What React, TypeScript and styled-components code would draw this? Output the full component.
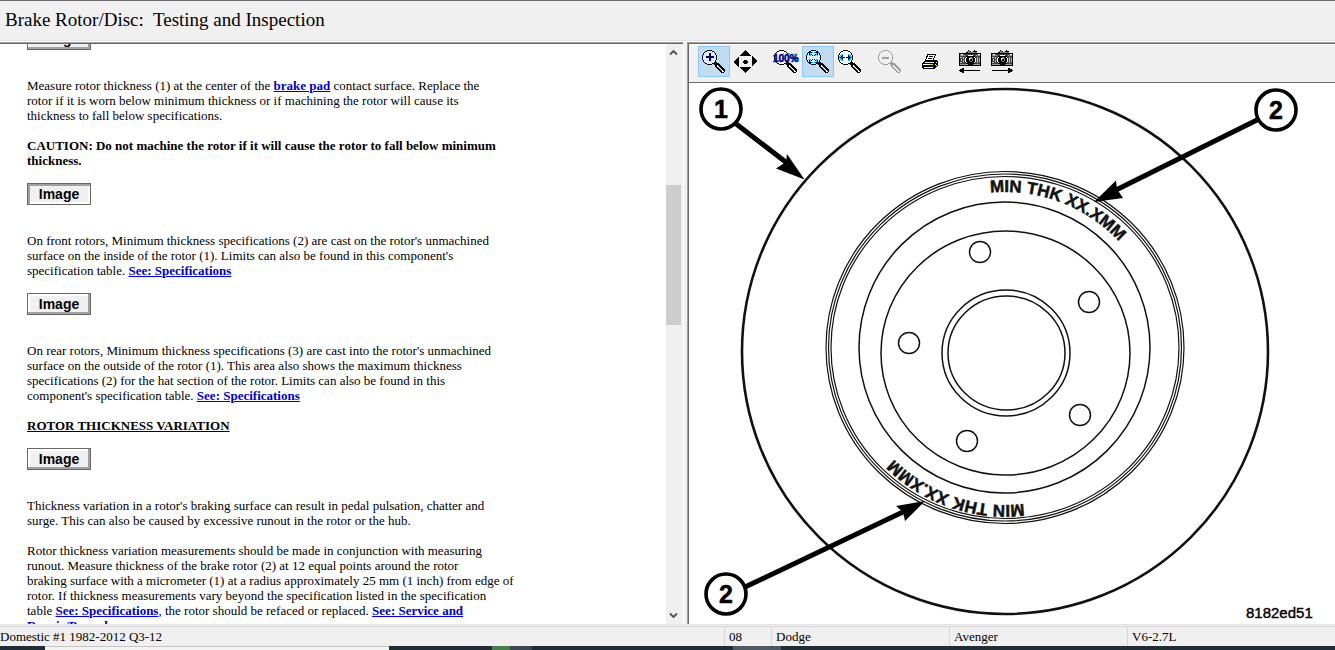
import React from "react";
import styled, { createGlobalStyle } from "styled-components";

const GlobalStyle = createGlobalStyle`
  * { box-sizing: border-box; }
  body { margin: 0; background: #f0f0f0; }
`;

const Window = styled.div`
  display: flex;
  flex-direction: column;
  height: 100vh;
  overflow: hidden;
  background: #f0f0f0;
  color: #000;
  font-family: "Liberation Serif", "Times New Roman", serif;
  font-size: 13px;
  line-height: 15px;
`;

const TitleBar = styled.header`
  flex: none;
  border-top: 1px solid #696969;
  border-bottom: 1px solid #fff;
  box-shadow: inset 0 -1px #e3e3e3;
  padding: 8px 5px 10px;
`;

const Title = styled.h1`
  margin: 0;
  font-size: 19px;
  line-height: 22px;
  font-weight: normal;
  white-space: pre;
`;

const Panes = styled.div`
  flex: 1;
  min-height: 0;
  display: grid;
  grid-template-columns: minmax(0, 683fr) 4px minmax(0, 648fr);
  grid-template-rows: minmax(0, 1fr);
`;

const Splitter = styled.div`
  border-left: 1px solid #fff;
`;

const ArticlePane = styled.section`
  display: flex;
  min-height: 0;
  border-top: 1px solid #a0a0a0;
  box-shadow: inset 0 1px #696969;
  padding: 1px 2px 0 0;
`;

const ArticleViewport = styled.div`
  flex: 1;
  min-width: 0;
  overflow: hidden;
  background: #fff;
`;

const Article = styled.article`
  margin-top: -16px;
  padding-left: 27px;
`;

const Paragraph = styled.p<{ $bold?: boolean }>`
  margin: 0 0 15px;
  font-weight: ${(p) => (p.$bold ? "bold" : "normal")};
`;

const SectionHeading = styled.h2`
  margin: 0 0 15px;
  font-size: 13px;
  line-height: 15px;
  text-decoration: underline;
`;

const TextLink = styled.a`
  color: #0000cc;
  font-weight: bold;
`;

const ImageButton = styled.button<{ $pressed?: boolean }>`
  display: block;
  width: 64px;
  height: 22px;
  margin: 0 0 28px;
  padding: 0;
  border: 1px solid #696969;
  background: #f0f0f0;
  box-shadow: ${(p) =>
    p.$pressed
      ? "inset 2px 2px #a0a0a0, inset -2px -2px #fff"
      : "inset -2px -2px #a0a0a0, inset 2px 2px #fff"};
  color: #000;
  font: bold 14px/20px "Liberation Sans", Arial, sans-serif;
`;

const ScrollBar = styled.div`
  flex: none;
  width: 15px;
  display: grid;
  grid-template-rows: 17px 124fr 140fr 282fr 17px;
  background: #f0f0f0;
`;

const ScrollButton = styled.button<{ $end?: boolean }>`
  grid-row: ${(p) => (p.$end ? 5 : 1)};
  display: flex;
  align-items: center;
  justify-content: center;
  padding: 0;
  border: 0;
  background: none;
`;

const ScrollThumb = styled.div`
  grid-row: 3;
  background: #cdcdcd;
`;

const ImagePane = styled.section`
  display: flex;
  flex-direction: column;
  min-height: 0;
  border: solid #a0a0a0;
  border-width: 1px 0 0 1px;
  background: #fff;
`;

const Toolbar = styled.div`
  flex: none;
  display: flex;
  gap: 8px;
  border: solid #696969;
  border-width: 1px 0 1px 1px;
  box-shadow: inset 0 1px #fff;
  padding: 2px 9px 5px;
  background: #f0f0f0;
`;

const ToolGroup = styled.div`
  display: flex;
`;

const ToolButton = styled.button<{ $active?: boolean }>`
  display: flex;
  align-items: center;
  justify-content: center;
  width: 32px;
  height: 31px;
  padding: 0;
  border: 1px solid ${(p) => (p.$active ? "#90c8f6" : "transparent")};
  background: ${(p) => (p.$active ? "#c0dcf3" : "transparent")};
`;

const Canvas = styled.div`
  flex: 1;
  min-height: 0;
  border-left: 1px solid #696969;
`;

const Drawing = styled.svg`
  display: block;
  width: 100%;
  height: 100%;
  font-family: "Liberation Sans", Arial, sans-serif;
`;

const StatusBar = styled.footer`
  flex: none;
  display: grid;
  grid-template-columns: 724fr 47fr 178fr 178fr 208fr;
  border-top: 1px solid #e3e3e3;
  padding-top: 1px;
`;

const StatusCell = styled.div<{ $first?: boolean }>`
  border-top: 1px solid #d7d7d7;
  border-left: ${(p) => (p.$first ? "0" : "1px solid #d7d7d7")};
  padding: 2px 0 2px ${(p) => (p.$first ? "0" : "4px")};
  white-space: nowrap;
`;

const TaskStrip = styled.div`
  flex: none;
  height: 4px;
  display: flex;
  background: #1f2d36;
`;

const TaskSegment = styled.span<{ $width: number; $color?: string }>`
  width: ${(p) => p.$width}px;
  background: ${(p) => p.$color ?? "transparent"};
`;

const SearchSegment = styled(TaskSegment)`
  border-top: 1px solid #c4c4c4;
`;

function Magnifier({ color = "#000", fill = "#fff", children }: { color?: string; fill?: string; children?: React.ReactNode }) {
  return (
    <svg width="24" height="24" viewBox="0 0 24 24" overflow="visible" shapeRendering="crispEdges" aria-hidden="true">
      <path d="M5 0h5v1h2v1h1v1h1v2h1v5h-1v2h-1v1h-1v1h-2v1H5v-1H3v-1H2v-1H1v-2H0V5h1V3h1V2h1V1h2z" fill={color} />
      <path d="M5 1h5v1h2v1h1v2h1v5h-1v2h-1v1h-2v1H5v-1H3v-1H2v-2H1V5h1V3h1V2h2z" fill={fill} />
      <path d="M13 12h2v1h2v1h1v1h1v1h1v1h1v1h1v1h1v3h-1v1h-3v-1h-1v-1h-1v-1h-1v-1h-1v-1h-1v-1h-1v-2h-1v-1h-1v-1h1z" fill={color} />
      <path d="M15 15h1v1h1v1h1v1h1v1h1v1h1v1h1v1h-2v-1h-1v-1h-1v-1h-1v-1h-1v-1h-1v-1h-1z" fill={color === "#000" ? "#fff" : "#f0f0f0"} />
      <path d="M16 17h1v1h1v1h1v1h1v1h-1v-1h-1v-1h-1v-1h-1z" fill={color === "#000" ? "#909090" : "#f0f0f0"} />
      {children}
    </svg>
  );
}

const ZoomInIcon = () => (
  <Magnifier fill="#dcecfb">
    <path d="M7 3h2v3h3v2H9v3H7V8H4V6h3z" fill="#000080" />
  </Magnifier>
);

const ZoomOutIcon = () => (
  <Magnifier color="#a0a0a0" fill="#f0f0f0">
    <path d="M4 7h7v2H4z" fill="#a0a0a0" />
  </Magnifier>
);

const FullSizeIcon = () => (
  <Magnifier>
    <path d="M2 3h1v9H2zM5 11h1v1H5zM9 3h1v9H9zM14 3h2v9h-2zM19 8h4v3h-1v1h-3zM20 3h1v2h-1z" fill="#00e5ff" />
    <text x="-1" y="12" fontFamily="Liberation Sans, Arial, sans-serif" fontWeight="bold" fontSize="10" fill="#000080" stroke="#000080" strokeWidth="0.5">100%</text>
  </Magnifier>
);

const FitPageIcon = () => (
  <Magnifier fill="#dcecfb">
    <path d="M3 2h4v1H5v1h1v1h1v1H6V5H5v1H3zM8 2h4v4h-1V5h-1v1H8V5h1V4h1V3H8zM3 9h2v1h1V9h1v1H6v1H5v1h2v1H3zM8 9h1v1h1V9h2v4H8v-1h2v-1H9v-1H8z" fill="#00cfff" />
    <path d="M3 2h3v1H4v2H3zM5 4h1v1h1v1H6V5H5zM9 2h3v3h-1V3H9zM9 4h1v1H9v1H8V5h1zM3 10h1v2h2v1H3zM6 9h1v1H6v1H5v-1h1zM8 9h1v1h1v1H9v-1H8zM11 10h1v3H9v-1h2z" fill="#000080" />
  </Magnifier>
);

const FitWidthIcon = () => (
  <Magnifier>
    <path d="M5 4v7H3v-1H2V9H1V6h1V5h1V4zM10 4h2v1h1v1h1v3h-1v1h-1v1h-2z" fill="#00d8ff" />
    <path d="M4 5h1v2h2v1H5v2H4V9H3V8H2V7h1V6h1zM10 5h1v1h1v1h1v1h-1v1h-1v1h-1V8H8V7h2z" fill="#000080" />
  </Magnifier>
);

const PanIcon = () => (
  <svg width="24" height="24" viewBox="0 0 24 24" shapeRendering="crispEdges" aria-hidden="true">
    <path d="M11 0h1v1h1v1h1v1h1v1h1v1h1v1H6V5h1V4h1V3h1V2h1V1h1zM6 17h11v1h-1v1h-1v1h-1v1h-1v1h-1v1h-1v-1h-1v-1H9v-1H8v-1H7v-1H6zM5 6v11H4v-1H3v-1H2v-1H1v-1H0v-2h1v-1h1V9h1V8h1V7h1zM18 6h1v1h1v1h1v1h1v1h1v2h-1v1h-1v1h-1v1h-1v1h-1zM10 10h3v1h1v2h-1v1h-3v-1H9v-2h1z" />
  </svg>
);

const PrintIcon = () => (
  <svg width="16" height="16" viewBox="0 0 16 16" shapeRendering="crispEdges" aria-hidden="true">
    <path d="M5 0h9v2h-1v2h-1v2h3v1h1v5h-1v1h-1v1h-1v1H1v-1H0V9h1V8h1V7h1V5h1V2h1z" />
    <path d="M6 1h7v1h-1v2h-1v2H4V5h1V3h1z" fill="#fff" />
    <path d="M7 2h4v1H7zM6 4h4v1H6z" />
    <path d="M3 8h9v1H3zM1 10h7v1H1zM2 13h9v1H2z" fill="#fff" />
    <path d="M14 8h1v1h-1zM13 10h1v1h-1zM14 11h1v1h-1z" fill="#fff" />
    <path d="M8 10h3v1H8z" fill="#e0d800" />
  </svg>
);

function CameraIcon({ back }: { back?: boolean }) {
  return (
    <svg width="22" height="25" viewBox="0 0 22 25" shapeRendering="crispEdges" aria-hidden="true">
      <path d="M7 3h1V2h1V1h1v1h2v1h3V1h1v1h2v2H7z" fill="#777" />
      <path d="M9 1h1v1H9zM7 3h2v1H7zM11 2h1v1h-1zM15 1h1v1h2v1h-4V2h1z" />
      <path d="M0 4h22v13H0z" fill="#444" />
      <path d="M0 4h22v1H0zM0 16h22v1H0zM0 5h1v11H0zM21 5h1v11h-1z" />
      <path d="M1 6h5v1H1zM17 6h4v1h-4zM1 15h20v1H1z" fill="#999" />
      <path d="M1 8h2v1H1zM4 8h1v2H4zM2 10h1v2H2zM4 11h1v2H4zM1 13h2v1H1zM18 8h1v6h-1zM20 9h1v4h-1z" fill="#bbb" />
      <path d="M9 6h5v1h2v2h1v4h-1v2h-2v1H9v-1H7v-2H6V9h1V7h2z" />
      <path d="M7 8h1v1H7v4h1v1H7v-1H6V9h1zM9 6h5v1H9zM15 8h1v1h1v4h-1v1h-1v-1h1V9h-1zM2 5h2v1H2zM19 5h2v1h-2z" fill="#fff" />
      <path d="M10 9h1V8h2v1h1v3h-1v1h-2v-1h-1z" fill="#888" />
      <path d="M11 10h2v2h-2z" />
      <path d="M10 9h2v1h-1v1h-1z" fill="#fff" />
      <path
        d={
          back
            ? "M0 21h1v-1h2v-1h2v2h16v1H5v2H3v-1H1v-1H0z"
            : "M22 21h-1v-1h-2v-1h-2v2H1v1h16v2h2v-1h2v-1h1z"
        }
      />
    </svg>
  );
}

const toolGroups = [
  [
    { label: "Zoom in", icon: <ZoomInIcon />, active: true },
    { label: "Pan", icon: <PanIcon /> },
  ],
  [
    { label: "Actual size", icon: <FullSizeIcon /> },
    { label: "Fit page", icon: <FitPageIcon />, active: true },
    { label: "Fit width", icon: <FitWidthIcon /> },
  ],
  [{ label: "Zoom out", icon: <ZoomOutIcon /> }],
  [{ label: "Print", icon: <PrintIcon /> }],
  [
    { label: "Previous image", icon: <CameraIcon back /> },
    { label: "Next image", icon: <CameraIcon /> },
  ],
] as { label: string; icon: React.ReactNode; active?: boolean }[][];

const holes = [
  [291, 169],
  [400, 219],
  [220, 260],
  [391, 332],
  [278, 358],
];

const callouts = [
  { x: 32, y: 26, label: "1" },
  { x: 587, y: 27, label: "2" },
  { x: 37, y: 511, label: "2" },
];

function RotorDrawing() {
  return (
    <Drawing viewBox="0 0 646 541" preserveAspectRatio="xMinYMin meet" role="img" aria-label="Brake rotor">
      <defs>
        <path id="castTop" d="M160 265a156 156 0 0 1 312 0" />
        <path id="castBottom" d="M474 264a158 158 0 0 1 -316 0" />
      </defs>
      <g fill="none" stroke="#111">
        <ellipse cx="316" cy="268.5" rx="263" ry="262.5" strokeWidth="2.6" />
        <g strokeWidth="1.2">
          <ellipse cx="316" cy="264.5" rx="179" ry="176" />
          <ellipse cx="316" cy="264.5" rx="176.5" ry="173.5" />
          <ellipse cx="316" cy="264.5" rx="174" ry="171" />
        </g>
        <g strokeWidth="1.5">
          <ellipse cx="315.5" cy="264.5" rx="145.5" ry="145.5" />
          <ellipse cx="316.5" cy="270" rx="124.5" ry="122" />
          <ellipse cx="317" cy="270" rx="64" ry="63" />
          <ellipse cx="317.5" cy="270" rx="58.5" ry="57" />
          {holes.map(([x, y]) => (
            <circle key={x} cx={x} cy={y} r="10.5" />
          ))}
        </g>
      </g>
      <g fontSize="17" fontWeight="bold" fill="#111" stroke="#111" strokeWidth="0.5">
        <text><textPath href="#castTop" startOffset="230">MIN THK XX.XMM</textPath></text>
        <text><textPath href="#castBottom" startOffset="229">MIN THK XX.XMM</textPath></text>
      </g>
      <g stroke="#000" strokeWidth="5">
        <path d="M46 40L98 80M568 37L427 107M56 504L216 428" />
      </g>
      <path d="M115.5 96.500L98 71L97 79L87 85.500zM405 119L427 97.500L428 106L434 115zM236 418L207 423L214 429L216 438z" />
      {callouts.map((c) => (
        <g key={`${c.x}-${c.y}`}>
          <circle cx={c.x} cy={c.y} r="20" fill="#fff" stroke="#000" strokeWidth="3.6" />
          <text x={c.x} y={c.y + 9} textAnchor="middle" fontSize="25" fontWeight="bold" stroke="#000" strokeWidth="0.5">{c.label}</text>
        </g>
      ))}
      <text x="557" y="535" fontSize="15" stroke="#000" strokeWidth="0.4">8182ed51</text>
    </Drawing>
  );
}

const Chevron = ({ down }: { down?: boolean }) => (
  <svg width="9" height="7" viewBox="0 0 9 7" aria-hidden="true">
    <path d={down ? "M1 1.500L4.500 5L8 1.500" : "M1 5.500L4.500 2L8 5.500"} fill="none" stroke="#505050" strokeWidth="1.8" />
  </svg>
);

export default function App() {
  return (
    <Window>
      <GlobalStyle />
      <TitleBar>
        <Title>{"Brake Rotor/Disc:  Testing and Inspection"}</Title>
      </TitleBar>
      <Panes>
        <ArticlePane>
          <ArticleViewport>
            <Article>
              <ImageButton>Image</ImageButton>
              <Paragraph>
                Measure rotor thickness (1) at the center of the <TextLink href="#brake-pad">brake pad</TextLink> contact surface. Replace the<br />
                rotor if it is worn below minimum thickness or if machining the rotor will cause its<br />
                thickness to fall below specifications.
              </Paragraph>
              <Paragraph $bold>
                CAUTION: Do not machine the rotor if it will cause the rotor to fall below minimum<br />
                thickness.
              </Paragraph>
              <ImageButton $pressed>Image</ImageButton>
              <Paragraph>
                On front rotors, Minimum thickness specifications (2) are cast on the rotor's unmachined<br />
                surface on the inside of the rotor (1). Limits can also be found in this component's<br />
                specification table. <TextLink href="#specifications">See: Specifications</TextLink>
              </Paragraph>
              <ImageButton>Image</ImageButton>
              <Paragraph>
                On rear rotors, Minimum thickness specifications (3) are cast into the rotor's unmachined<br />
                surface on the outside of the rotor (1). This area also shows the maximum thickness<br />
                specifications (2) for the hat section of the rotor. Limits can also be found in this<br />
                component's specification table. <TextLink href="#specifications">See: Specifications</TextLink>
              </Paragraph>
              <SectionHeading>ROTOR THICKNESS VARIATION</SectionHeading>
              <ImageButton>Image</ImageButton>
              <Paragraph>
                Thickness variation in a rotor's braking surface can result in pedal pulsation, chatter and<br />
                surge. This can also be caused by excessive runout in the rotor or the hub.
              </Paragraph>
              <Paragraph>
                Rotor thickness variation measurements should be made in conjunction with measuring<br />
                runout. Measure thickness of the brake rotor (2) at 12 equal points around the rotor<br />
                braking surface with a micrometer (1) at a radius approximately 25 mm (1 inch) from edge of<br />
                rotor. If thickness measurements vary beyond the specification listed in the specification<br />
                table <TextLink href="#specifications">See: Specifications</TextLink>, the rotor should be refaced or
                replaced. <TextLink href="#procedures">See: Service and<br />Repair/Procedures</TextLink>
              </Paragraph>
            </Article>
          </ArticleViewport>
          <ScrollBar>
            <ScrollButton aria-label="Scroll up"><Chevron /></ScrollButton>
            <ScrollThumb />
            <ScrollButton $end aria-label="Scroll down"><Chevron down /></ScrollButton>
          </ScrollBar>
        </ArticlePane>
        <Splitter />
        <ImagePane>
          <Toolbar role="toolbar" aria-label="Image tools">
            {toolGroups.map((group) => (
              <ToolGroup key={group[0].label}>
                {group.map((tool) => (
                  <ToolButton key={tool.label} $active={tool.active} aria-label={tool.label}>
                    {tool.icon}
                  </ToolButton>
                ))}
              </ToolGroup>
            ))}
          </Toolbar>
          <Canvas>
            <RotorDrawing />
          </Canvas>
        </ImagePane>
      </Panes>
      <StatusBar>
        <StatusCell $first>Domestic #1 1982-2012 Q3-12</StatusCell>
        <StatusCell>08</StatusCell>
        <StatusCell>Dodge</StatusCell>
        <StatusCell>Avenger</StatusCell>
        <StatusCell>V6-2.7L</StatusCell>
      </StatusBar>
      <TaskStrip>
        <TaskSegment $width={45} />
        <SearchSegment $width={344} $color="#f3f3f3" />
        <TaskSegment $width={103} />
        <TaskSegment $width={18} $color="#43804a" />
        <TaskSegment $width={22} $color="#3b4753" />
        <TaskSegment $width={201} />
        <TaskSegment $width={48} $color="#4d5963" />
      </TaskStrip>
    </Window>
  );
}
